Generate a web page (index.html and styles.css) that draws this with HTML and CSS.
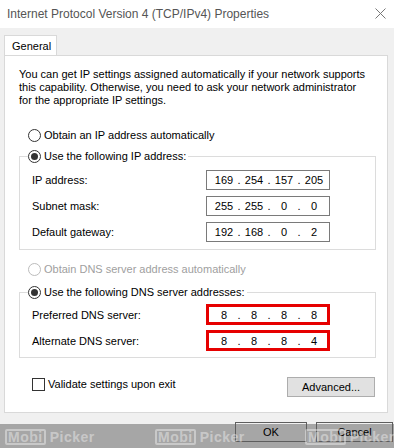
FILE: index.html
```html
<!DOCTYPE html>
<html lang="en">
<head>
    <meta charset="UTF-8">
    <title>Internet Protocol Version 4 (TCP/IPv4) Properties</title>
    <link rel="stylesheet" href="styles.css">
</head>
<body>

    <div class="titlebar">
        <span class="title">Internet Protocol Version 4 (TCP/IPv4) Properties</span>
        <svg class="close" width="11" height="11" viewBox="0 0 11 11">
            <path d="M0.5 0.5 L10.5 10.5 M10.5 0.5 L0.5 10.5" stroke="#777" stroke-width="1" fill="none"/>
        </svg>
    </div>

    <div class="tabs">
        <div class="tab">General</div>
    </div>

    <div class="panel">
        <p class="intro">You can get IP settings assigned automatically if your network supports<br>this capability. Otherwise, you need to ask your network administrator<br>for the appropriate IP settings.</p>

        <div class="option first"><span class="radio"></span>Obtain an IP address automatically</div>

        <fieldset class="group">
            <legend class="option"><span class="radio checked"></span>Use the following IP address:</legend>
            <div class="row">
                <span class="label">IP address:</span>
                <div class="ipbox"><span class="seg">169</span><span class="dot">.</span><span class="seg">254</span><span class="dot">.</span><span class="seg">157</span><span class="dot">.</span><span class="seg">205</span></div>
            </div>
            <div class="row">
                <span class="label">Subnet mask:</span>
                <div class="ipbox"><span class="seg">255</span><span class="dot">.</span><span class="seg">255</span><span class="dot">.</span><span class="seg">0</span><span class="dot">.</span><span class="seg">0</span></div>
            </div>
            <div class="row">
                <span class="label">Default gateway:</span>
                <div class="ipbox"><span class="seg">192</span><span class="dot">.</span><span class="seg">168</span><span class="dot">.</span><span class="seg">0</span><span class="dot">.</span><span class="seg">2</span></div>
            </div>
        </fieldset>

        <div class="option disabled"><span class="radio"></span>Obtain DNS server address automatically</div>

        <fieldset class="group dns">
            <legend class="option"><span class="radio checked"></span>Use the following DNS server addresses:</legend>
            <div class="row">
                <span class="label">Preferred DNS server:</span>
                <div class="ipbox marked"><span class="seg">8</span><span class="dot">.</span><span class="seg">8</span><span class="dot">.</span><span class="seg">8</span><span class="dot">.</span><span class="seg">8</span></div>
            </div>
            <div class="row">
                <span class="label">Alternate DNS server:</span>
                <div class="ipbox marked"><span class="seg">8</span><span class="dot">.</span><span class="seg">8</span><span class="dot">.</span><span class="seg">8</span><span class="dot">.</span><span class="seg">4</span></div>
            </div>
        </fieldset>

        <div class="footer-row">
            <div class="option check"><span class="checkbox"></span>Validate settings upon exit</div>
            <button class="btn">Advanced...</button>
        </div>
    </div>

    <div class="band">
        <button class="btn dark ok">OK</button>
        <button class="btn dark cancel">Cancel</button>
        <span class="mark m1"><span class="mobi">Mobi</span>Picker</span>
        <span class="mark m2"><span class="mobi">Mobi</span>Picker</span>
        <span class="mark m3"><span class="mobi">Mobi</span>Picker</span>
    </div>

</body>
</html>
```

FILE: styles.css
```css
body {
    margin: 0;
    width: 394px;
    height: 448px;
    overflow: hidden;
    background-color: #f0f0f0;
    font-family: "Liberation Sans", Arial, sans-serif;
    font-size: 11px;
    color: #000;
}
.titlebar {
    height: 28px;
    background-color: #fff;
    display: flex;
    align-items: center;
    justify-content: space-between;
    padding: 0 8px 0 7px;
}
.title {
    font-size: 12px;
    color: #555;
}
.close {
    margin-top: -1px;
}
.tabs {
    display: flex;
    padding: 7px 0 0 4px;
}
.tab {
    width: 53px;
    height: 20px;
    line-height: 20px;
    padding-left: 7px;
    box-sizing: border-box;
    background-color: #fff;
    border: 1px solid #d9d9d9;
    border-bottom: none;
    position: relative;
    z-index: 1;
}
.panel {
    margin: 0 6px 0 4px;
    height: 358px;
    box-sizing: border-box;
    background-color: #fff;
    border: 1px solid #d9d9d9;
    padding-top: 12px;
}
.intro {
    margin: 0 0 0 14px;
    line-height: 13px;
}
.option {
    display: flex;
    align-items: center;
    line-height: 13px;
    margin-left: 23px;
}
.option.first {
    margin-top: 22px;
}
.option.disabled {
    margin-top: 13px;
    color: #a0a0a0;
}
.radio {
    width: 13px;
    height: 13px;
    box-sizing: border-box;
    border: 1px solid #333;
    border-radius: 50%;
    background-color: #fff;
    margin-right: 3px;
    display: flex;
    align-items: center;
    justify-content: center;
}
.radio.checked::after {
    content: "";
    width: 7px;
    height: 7px;
    border-radius: 50%;
    background-color: #333;
}
.disabled .radio {
    border-color: #bcbcbc;
}
.group {
    margin: 7px 11px 0 14px;
    border: 1px solid #dcdcdc;
    padding: 0 0 7px 4px;
}
.group legend {
    padding: 0 2px 0 0;
    line-height: 14px;
    margin-left: 4px;
}
.group.dns {
    margin-top: 9px;
    padding-bottom: 6px;
}
.row {
    display: flex;
    align-items: center;
    margin-top: 6px;
    padding-left: 8px;
}
.row:first-of-type {
    margin-top: 7px;
}
.label {
    width: 174px;
}
.ipbox {
    width: 124px;
    height: 20px;
    box-sizing: border-box;
    border: 1px solid #7a7a7a;
    display: flex;
    align-items: center;
    padding-left: 5px;
}
.seg {
    width: 24px;
    text-align: center;
}
.dot {
    width: 6px;
    text-align: center;
}
.dns .row {
    margin-top: 5px;
}
.ipbox.marked {
    height: 21px;
    border: 3px solid #e60000;
    padding-left: 3px;
}
.footer-row {
    display: flex;
    justify-content: space-between;
    align-items: flex-start;
    margin: 19px 12px 0 27px;
}
.option.check {
    margin-left: 0;
    margin-top: 1px;
}
.checkbox {
    width: 13px;
    height: 13px;
    box-sizing: border-box;
    border: 1px solid #333;
    margin-right: 3px;
}
.btn {
    font-family: "Liberation Sans", Arial, sans-serif;
    font-size: 11px;
    width: 88px;
    height: 20px;
    padding: 0;
    background-color: #e1e1e1;
    border: 1px solid #adadad;
    color: #000;
}
.band {
    position: relative;
    margin-top: 11px;
    height: 24px;
    background-color: #a6a6a6;
    display: flex;
    justify-content: flex-end;
    gap: 9px;
    padding-right: 1px;
}
.btn.dark {
    margin-top: -2px;
    background-color: transparent;
    border: 1px solid #5e5e5e;
}
.ok {
    width: 72px;
}
.cancel {
    width: 77px;
}
.mark {
    position: absolute;
    top: 5px;
    display: flex;
    align-items: center;
    font-weight: bold;
    font-size: 14px;
    line-height: 12px;
    color: rgba(255, 255, 255, 0.4);
    letter-spacing: 0.5px;
}
.mobi {
    border: 2px solid rgba(255, 255, 255, 0.4);
    border-radius: 2px;
    padding: 0 1px;
    margin-right: 4px;
}
.m1 {
    left: 5px;
}
.m2 {
    left: 155px;
}
.m3 {
    left: 305px;
}
```
